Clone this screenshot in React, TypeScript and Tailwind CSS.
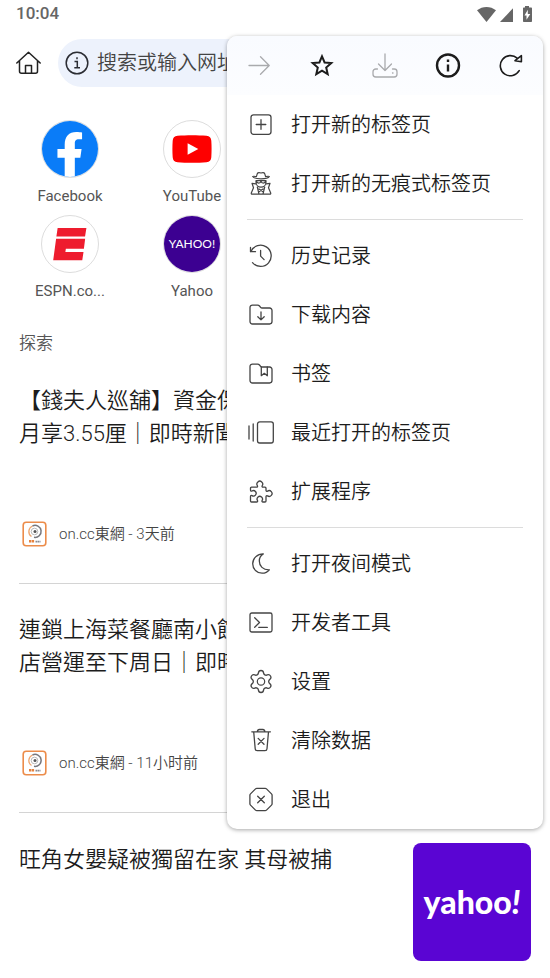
import type { ReactNode } from 'react';

type MenuEntry = { label: string; icon: ReactNode };

function Icon({ children, width = 1.3 }: { children: ReactNode; width?: number }) {
  return (
    <svg
      viewBox="0 0.5 24 24"
      className="size-6 shrink-0 overflow-visible"
      fill="none"
      stroke="currentColor"
      strokeWidth={width}
      strokeLinecap="round"
      strokeLinejoin="round"
      aria-hidden="true"
    >
      {children}
    </svg>
  );
}

const folder =
  'M1 5a2.4 2.4 0 0 1 2.4-2.4h5.2c.8 0 1.4.3 1.9.9l1.1 1.3c.4.5 1 .7 1.6.7h7.4A2.4 2.4 0 0 1 23 7.9v11.2a2.4 2.4 0 0 1-2.4 2.4H3.4A2.4 2.4 0 0 1 1 19.1z';

// Menu items, split into groups by a divider line
const groups: MenuEntry[][] = [
  [
    {
      label: '打开新的标签页',
      icon: (
        <Icon>
          <rect x="2" y="2.3" width="20" height="19.5" rx="2.5" />
          <path d="M7.2 12h9.6M12 7.2v9.6" />
        </Icon>
      ),
    },
    {
      label: '打开新的无痕式标签页',
      icon: (
        <Icon width={1.2}>
          <path d="M3.7 5c.8 1.5 4 2.3 8.3 2.3s7.5-.8 8.3-2.3c-.8-.5-2-.3-3.7.2l-.9-3C15.3 1 14 .9 12 1.5 10 .9 8.7 1 8.3 2.2l-.9 3C5.7 4.7 4.5 4.5 3.7 5z" />
          <path d="M7 9.2h10M7 9.2v1.5c0 3 2.3 5 5 5s5-2 5-5V9.2M7.5 9.5c.3 2.7 4 2.7 4.5 0M12 9.5c.5 2.7 4.2 2.7 4.5 0" />
          <path d="M6.8 12.3 3 11.8l1.5 4.4-2.2 5.2c-.2.7.1 1.3.9 1.3h17.6c.8 0 1.1-.6.9-1.3l-2.2-5.2 1.5-4.4-3.8.5M8.3 15.5l1.7 7M15.7 15.5l-1.7 7M10 17.5l4 2.8M14 17.5l-4 2.8" />
        </Icon>
      ),
    },
  ],
  [
    {
      label: '历史记录',
      icon: (
        <Icon>
          <path d="M1.5 4v4.2h5" />
          <path d="M1.9 8A10.6 10.6 0 1 1 3.5 19.2" />
          <path d="M11.6 7v5.6l3.5 3.5" />
        </Icon>
      ),
    },
    {
      label: '下载内容',
      icon: (
        <Icon>
          <path d={folder} />
          <path d="M12 9.5v7.8M8.8 14.2l3.2 3.2 3.2-3.2" />
        </Icon>
      ),
    },
    {
      label: '书签',
      icon: (
        <Icon>
          <path d={folder} />
          <path d="M12.3 5.5v8.7l3-2.4 3 2.4V5.5" />
        </Icon>
      ),
    },
    {
      label: '最近打开的标签页',
      icon: (
        <Icon>
          <path d="M0 5.5v13M4.2 3.5v17" />
          <rect x="8.5" y="1.3" width="15.8" height="21.2" rx="2.2" />
        </Icon>
      ),
    },
    {
      label: '扩展程序',
      icon: (
        <Icon>
          <path d="M2.5 7.7h5c1 0 1.3-.8.9-1.5a2.9 2.9 0 1 1 4.8 0c-.4.7-.1 1.5.9 1.5H16a1 1 0 0 1 1 1v2c0 1 .8 1.3 1.5.9a2.9 2.9 0 1 1 0 4.8c-.7-.4-1.5-.1-1.5.9v4.2a1 1 0 0 1-1 1h-2c-1 0-1.3-.8-.9-1.5a2.7 2.7 0 1 0-4.6 0c.4.7.1 1.5-.9 1.5H2.5a1 1 0 0 1-1-1V17c0-1 .8-1.3 1.5-.9a2.7 2.7 0 1 0 0-4.6c-.7.4-1.5.1-1.5-.9V8.7a1 1 0 0 1 1-1z" />
        </Icon>
      ),
    },
  ],
  [
    {
      label: '打开夜间模式',
      icon: (
        <Icon>
          <path d="M14.3 2.4C8 2.4 3.7 7 3.7 12.2c0 5.4 4.3 9.5 9.3 9.5 3 0 5.8-1.4 7.3-3.4-6.3.2-10-3.8-10-8.7 0-3.1 1.7-5.8 4-7.2z" />
        </Icon>
      ),
    },
    {
      label: '开发者工具',
      icon: (
        <Icon>
          <rect x="1" y="2.5" width="22" height="19" rx="1.8" />
          <path d="M5.7 7.3 10.5 12l-4.8 4.7M9.8 16.9h8.5" />
        </Icon>
      ),
    },
    {
      label: '设置',
      icon: (
        <Icon width={1.2}>
          <g transform="translate(-1.2 -1.2) scale(1.1)">
            <path d="M9.671 4.136a2.34 2.34 0 0 1 4.659 0 2.34 2.34 0 0 0 3.319 1.915 2.34 2.34 0 0 1 2.33 4.033 2.34 2.34 0 0 0 0 3.831 2.34 2.34 0 0 1-2.33 4.033 2.34 2.34 0 0 0-3.319 1.915 2.34 2.34 0 0 1-4.659 0 2.34 2.34 0 0 0-3.32-1.915 2.34 2.34 0 0 1-2.33-4.033 2.34 2.34 0 0 0 0-3.831A2.34 2.34 0 0 1 6.35 6.051a2.34 2.34 0 0 0 3.319-1.915" />
          </g>
          <circle cx="12" cy="12" r="3.7" />
        </Icon>
      ),
    },
    {
      label: '清除数据',
      icon: (
        <Icon>
          <path d="M2.8 3.3h18.6M8.3 3.3c.2-1.5.9-2.3 2-2.3h3.6c1.1 0 1.8.8 2 2.3M4.7 3.3l1.5 17a2 2 0 0 0 2 1.9H16a2 2 0 0 0 2-1.9l1.5-17M9.2 9.9l5.8 5.8M15 9.9l-5.8 5.8" />
        </Icon>
      ),
    },
    {
      label: '退出',
      icon: (
        <Icon>
          <path d="M7.9.8h8.2a2 2 0 0 1 1.4.6l5 5a2 2 0 0 1 .6 1.4v8.4a2 2 0 0 1-.6 1.4l-5 5a2 2 0 0 1-1.4.6H7.9a2 2 0 0 1-1.4-.6l-5-5a2 2 0 0 1-.6-1.400V7.8a2 2 0 0 1 .6-1.4l5-5A2 2 0 0 1 7.9.8zM8.7 8.7l6.6 6.6M15.3 8.7l-6.6 6.6" />
        </Icon>
      ),
    },
  ],
];

const actions: (MenuEntry & { disabled?: boolean })[] = [
  {
    label: '前进',
    disabled: true,
    icon: (
      <Icon>
        <path d="M2 12h20M13.5 3.2l8.7 8.8-8.7 8.8" />
      </Icon>
    ),
  },
  {
    label: '收藏',
    icon: (
      <Icon width={2}>
        <path
          strokeLinejoin="miter"
          d="m12 2.8 2.6 6.2 6.7.6-5.1 4.4 1.5 6.6-5.7-3.5-5.7 3.5 1.5-6.6-5.1-4.4 6.7-.6z"
        />
      </Icon>
    ),
  },
  {
    label: '下载',
    disabled: true,
    icon: (
      <Icon>
        <path d="M12 .5V17M5.5 10.5 12 17l6.5-6.5M4.5 15.5H2.8A2.8 2.8 0 0 0 0 18.3v2.4a2.8 2.8 0 0 0 2.8 2.8h18.4a2.8 2.8 0 0 0 2.8-2.8v-2.4a2.8 2.8 0 0 0-2.8-2.8h-1.7M19.5 19.5h.5" />
      </Icon>
    ),
  },
  {
    label: '页面信息',
    icon: (
      <Icon width={2.4}>
        <circle cx="12" cy="12" r="11" />
        <path strokeLinecap="butt" d="M12 11v7M12 6v2.4" />
      </Icon>
    ),
  },
  {
    label: '刷新',
    icon: (
      <Icon width={1.6}>
        <path d="M20.2 17.2A10.1 10.1 0 1 1 18.2 4.7M22.4 2.2v6l-6.4-1z" />
      </Icon>
    ),
  },
];

const sites = [
  {
    name: 'Facebook',
    logo: (
      <svg viewBox="0 0 58 58" className="size-full" aria-hidden="true">
        <rect width="58" height="58" fill="#0a7cf8" />
        <path
          fill="#fff"
          d="M23.5 58V38H16v-9h7.5v-4.5C23.5 16 28 11.5 35.5 11.5c2.5 0 4.5.2 6 .5v7h-3.3c-3.4 0-4.2 1.7-4.2 4.3V29h7l-1.3 9H34v20z"
        />
      </svg>
    ),
  },
  {
    name: 'YouTube',
    logo: (
      <svg viewBox="0 0 58 58" className="size-full" aria-hidden="true">
        <path
          fill="#fe0000"
          d="M14 15.3c9-.8 21-.8 30 0 3.3.3 4.8 2 5 5.2.4 5.5.4 11.5 0 17-.2 3.2-1.7 4.9-5 5.2-9 .8-21 .8-30 0-3.3-.3-4.8-2-5-5.200-.4-5.500-.4-11.500 0-17 .2-3.200 1.700-4.900 5-5.200z"
        />
        <path fill="#fff" d="m24.5 23 11 6-11 6z" />
      </svg>
    ),
  },
  {
    name: 'ESPN.co...',
    logo: (
      <svg viewBox="0 0 58 58" className="size-full" aria-hidden="true">
        <path
          fill="#ee1c2e"
          d="M16.2 12.3H46l-1.4 9H14.9zM14.6 23.5h30.1L43.4 34H24.7l-.5 3.2H43l-1.3 8.6H11.6z"
        />
      </svg>
    ),
  },
  {
    name: 'Yahoo',
    logo: (
      <span className="flex size-full items-center justify-center bg-[#3c0091] font-['Lato',sans-serif] text-[12px] text-white">
        YAHOO!
      </span>
    ),
  },
];

const articles = [
  { lines: ['【錢夫人巡舖】資金保', '月享3.55厘｜即時新聞'], source: 'on.cc東網 - 3天前' },
  { lines: ['連鎖上海菜餐廳南小館', '店營運至下周日｜即時'], source: 'on.cc東網 - 11小时前' },
];

function StatusBar() {
  return (
    <div className="flex h-7 items-center justify-between pl-4 pr-[17px] text-[#666]">
      <span className="text-[17px] font-medium">10:04</span>
      <svg width="56" height="18" viewBox="0 0 56 18" fill="currentColor" aria-hidden="true">
        <path d="M0 5.3C5.5.8 13.5.8 19 5.3L9.5 17z" />
        <path d="M36 3.3V17H23z" />
        <path
          fillRule="evenodd"
          d="M48 1h4v1.5h2c.6 0 1 .4 1 1V16c0 .6-.4 1-1 1h-7c-.6 0-1-.4-1-1V3.5c0-.6.4-1 1-1h1zM50.8 4.8l-3.3 5.7h2v4.3L53.3 9h-2.5z"
        />
      </svg>
    </div>
  );
}

function AddressBar() {
  return (
    <div className="mt-[11px] flex items-center gap-4 px-4">
      <button type="button" aria-label="主页" className="text-[#222]">
        <svg
          width="26"
          height="24"
          viewBox="0 0 26 24"
          fill="none"
          stroke="currentColor"
          strokeWidth="1.5"
          strokeLinecap="round"
          strokeLinejoin="round"
          aria-hidden="true"
        >
          <path d="M.8 12 12.5 1.2 24.2 12M3.5 9.8v10.5a2 2 0 0 0 2 2h14a2 2 0 0 0 2-2V9.8M9.5 22v-7.5h6V22" />
        </svg>
      </button>
      <div className="flex h-12 flex-1 items-center gap-2 rounded-full bg-[#edf2fc] pl-[7px]">
        <svg width="24" height="24" viewBox="0 0 24 24" fill="none" stroke="#2b2d33" strokeWidth="1.5" aria-hidden="true">
          <circle cx="12" cy="12" r="10.8" />
          <path d="M9.5 10.5h2.8v6M9.3 16.8H15M12 6.2v2" />
        </svg>
        <input
          type="text"
          aria-label="搜索或输入网址"
          placeholder="搜索或输入网址"
          className="min-w-0 flex-1 bg-transparent text-[20px] font-[350] text-[#333] outline-none placeholder:text-[#444]"
        />
      </div>
    </div>
  );
}

function SourceLogo() {
  return (
    <svg width="25" height="26" viewBox="0 0 25 26" fill="none" aria-hidden="true">
      <rect x="1.2" y="1.2" width="22.6" height="23.6" rx="3" stroke="#ec8c4a" strokeWidth="1.6" />
      <path d="M9.5 15.5A6 6 0 0 1 10.5 5" stroke="#eda56f" strokeWidth="1.3" />
      <path d="M10.500 5a6 6 0 1 1 1.500 11.300" stroke="#77777c" strokeWidth="1.5" />
      <circle cx="12.5" cy="10.5" r="3.3" stroke="#bbb" strokeWidth="1" />
      <circle cx="13" cy="10.5" r="1.5" fill="#555" />
      <path d="M7 20.3h5.5" stroke="#e5813d" strokeWidth="2.4" strokeDasharray="2.3 .5" />
      <path d="M13.5 20.6h5" stroke="#8a8a90" strokeWidth="1.6" strokeDasharray="1.8 .4" />
    </svg>
  );
}

function Menu() {
  return (
    <div className="absolute right-[7px] top-9 w-[316px] overflow-hidden rounded-[10px] bg-white shadow-[0_1px_4px_rgba(0,0,0,0.35)]">
      <div className="grid h-[59px] grid-cols-5 bg-linear-to-b from-[#f9fbff] to-[#fcfdff]">
        {actions.map((action) => (
          <button
            key={action.label}
            type="button"
            aria-label={action.label}
            disabled={action.disabled}
            className="flex items-center justify-center text-[#1c1c1c] disabled:text-[#a9aaad]"
          >
            {action.icon}
          </button>
        ))}
      </div>
      {groups.map((group, i) => (
        <div key={i}>
          {i > 0 && <hr className="mx-5 my-1.5 border-[#dcdcdc]" />}
          {group.map((item) => (
            <button
              key={item.label}
              type="button"
              className="flex h-[59px] w-full items-center gap-[18px] px-[22px] text-left text-[#444]"
            >
              {item.icon}
              <span className="text-[20px] font-[350] text-[#1c1c1c]">{item.label}</span>
            </button>
          ))}
        </div>
      ))}
    </div>
  );
}

export default function App() {
  return (
    <div className="relative min-h-screen overflow-hidden bg-white font-['Roboto','Noto_Sans_CJK_SC',sans-serif]">
      <StatusBar />
      <AddressBar />

      <nav className="mt-[33px] flex flex-col gap-[9px] pl-[9px]">
        {[sites.slice(0, 2), sites.slice(2)].map((row, i) => (
          <div key={i} className="flex">
            {row.map((site) => (
              <a key={site.name} href="#" className="flex w-[122px] flex-col items-center gap-2">
                <span className="size-[58px] overflow-hidden rounded-full border border-[#ddd]">{site.logo}</span>
                <span className="text-[15px] leading-5 text-[#555]">{site.name}</span>
              </a>
            ))}
          </div>
        ))}
      </nav>

      <main className="mt-[30px] px-[19px]">
        <h2 className="text-[17px] font-[350] leading-6 text-[#555]">探索</h2>
        {articles.map((article) => (
          <article key={article.source} className="border-b border-[#d4d4d4] pb-9 pt-[29px]">
            <h3 className="font-['Roboto','Noto_Sans_CJK_TC',sans-serif] text-[22px] font-[350] leading-[33px] text-[#1c1c1c]">
              {article.lines.map((line) => (
                <span key={line} className="block">
                  {line}
                </span>
              ))}
            </h3>
            <div className="mt-[71px] flex items-center gap-3 pl-[3px]">
              <SourceLogo />
              <span className="text-[15px] font-[350] leading-6 text-[#444]">{article.source}</span>
            </div>
          </article>
        ))}
        <article className="flex items-start justify-between pt-[30px]">
          <h3 className="font-['Roboto','Noto_Sans_CJK_TC',sans-serif] text-[22px] font-[350] leading-[33px] text-[#1c1c1c]">
            旺角女嬰疑被獨留在家 其母被捕
          </h3>
          <div className="flex size-[118px] items-center justify-center rounded-lg bg-[#5a05d3] font-['Lato',sans-serif] text-[32px] font-black text-white">
            yahoo<i>!</i>
          </div>
        </article>
      </main>

      <Menu />
    </div>
  );
}
